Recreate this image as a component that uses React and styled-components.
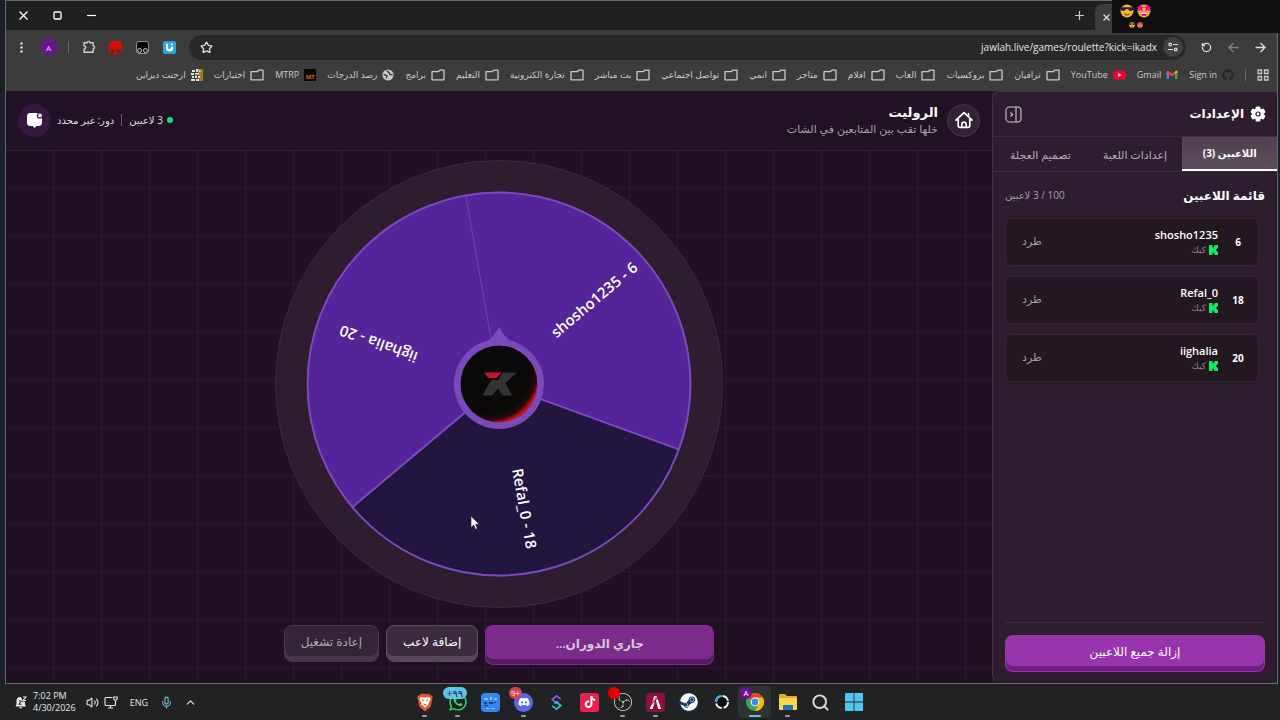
import React from "react";
import styled, { createGlobalStyle, css } from "styled-components";
import { Mic, ChevronUp, Volume2, Search, Star, RotateCcw } from "lucide-react";
import { FaDiscord, FaWhatsapp, FaTiktok, FaSteam, FaGithub } from "react-icons/fa";
import { SiObsstudio, SiFivem } from "react-icons/si";

const GlobalStyle = createGlobalStyle`
  * {
    box-sizing: border-box;
  }

  body {
    margin: 0;
    background: #1c2029;
    font-family: "Open Sans", "DejaVu Sans", sans-serif;
    color: #fff;
  }

  button, input {
    font-family: inherit;
    color: inherit;
  }

  button {
    padding: 0;
    border: 0;
    background: none;
  }

  svg {
    display: block;
    flex: none;
  }
`;

const Desktop = styled.div`
  position: relative;
  display: flex;
  flex-direction: column;
  min-height: 100vh;
  overflow: hidden;
`;

const BrowserWindow = styled.div`
  flex: 1;
  display: flex;
  flex-direction: column;
  margin: 0 2px 0 5px;
  border: 1px solid #6a6a6c;
`;

const TitleBar = styled.header`
  display: flex;
  align-items: center;
  height: 29px;
  background: #1e211f;
`;

const Tab = styled.div`
  align-self: flex-end;
  display: flex;
  align-items: center;
  justify-content: flex-end;
  width: 182px;
  height: 26px;
  padding-left: 5px;
  border-radius: 8px 8px 0 0;
  background: #3c3c3c;
`;

const TitleButton = styled.button`
  display: grid;
  place-items: center;
  width: ${({ $wide }) => ($wide ? "34px" : "12px")};
  height: 24px;
`;

const NewTabButton = styled(TitleButton)`
  width: 24px;
  margin: 0 4px 0 auto;
`;

const Toolbar = styled.div`
  display: flex;
  align-items: center;
  height: 34px;
  padding: 0 3px 0 2px;
  background: #3c3c3c;
`;

const ToolButton = styled.button`
  display: grid;
  place-items: center;
  width: 27px;
  height: 26px;
  color: ${({ $dim }) => ($dim ? "#808080" : "#dcdcdc")};
`;

const Avatar = styled.span`
  display: grid;
  place-items: center;
  width: 16px;
  height: 16px;
  border-radius: 50%;
  background: #6f1196;
  font-size: 8px;
`;

const Divider = styled.span`
  width: 1px;
  height: 12px;
  margin: 0 ${({ $gap }) => $gap || "6px"};
  background: #6b6b6b;
`;

const AddressBar = styled.div`
  flex: 1;
  display: flex;
  align-items: center;
  height: 25px;
  margin: 0 7px 0 6px;
  padding: 0 1px 0 4px;
  border-radius: 13px;
  background: #282828;
`;

const AddressInput = styled.input`
  flex: 1;
  min-width: 0;
  border: 0;
  outline: 0;
  background: none;
  direction: ltr;
  text-align: right;
  font-size: 10px;
  color: #e6e6e6;
`;

const SiteInfo = styled.button`
  display: grid;
  place-items: center;
  width: 20px;
  height: 20px;
  margin: 0 2px 0 4px;
  border-radius: 50%;
  background: #414141;
`;

const BookmarkBar = styled.nav`
  display: flex;
  align-items: center;
  gap: 11px;
  height: 27px;
  padding: 0 8px 5px;
  background: #3c3c3c;
  color: #c9c9c9;
`;

const Bookmark = styled.a`
  display: flex;
  align-items: center;
  gap: 5px;
  font-size: 9px;
  line-height: 16px;
  white-space: nowrap;
  color: inherit;
  text-decoration: none;
`;

const MtBadge = styled.span`
  display: grid;
  place-items: center;
  width: 12px;
  height: 12px;
  background: #0d0505;
  font-size: 6px;
  font-weight: 700;
  color: #f0532a;
`;

const Page = styled.div`
  flex: 1;
  display: flex;
`;

const Sidebar = styled.aside`
  display: flex;
  flex-direction: column;
  width: 285px;
  border: 1px solid #43324a;
  border-width: 1px 0 0 1px;
  border-radius: 0 8px 8px 0;
  border-radius: 8px 0 0 8px;
  background: #2d1d2f;
`;

const SidebarHeader = styled.div`
  display: flex;
  align-items: center;
  gap: 6px;
  height: 44px;
  padding: 0 11px 0 12px;
`;

const SidebarTitle = styled.h2`
  flex: 1;
  margin: 0;
  font-size: 12px;
  line-height: 20px;
  font-weight: 700;
`;

const Tabs = styled.div`
  display: grid;
  grid-template-columns: repeat(3, 1fr);
  height: 36px;
  border: 1px solid #3b2c3e;
  border-width: 1px 0;
`;

const TabButton = styled.button`
  font-size: 11px;
  color: #b7aaba;

  ${({ $active }) =>
    $active &&
    css`
      border-bottom: 2px solid #fff;
      background: linear-gradient(#51414f, #5c4d5d);
      font-size: 10px;
      font-weight: 700;
      color: #fff;
    `}
`;

const ListHeader = styled.div`
  display: flex;
  align-items: center;
  justify-content: space-between;
  height: 46px;
  padding: 0 12px;
`;

const ListTitle = styled.h3`
  margin: 0;
  font-size: 12px;
  font-weight: 700;
`;

const ListCount = styled.span`
  font-size: 10px;
  color: #a99dac;
`;

const Players = styled.ul`
  flex: 1;
  display: flex;
  flex-direction: column;
  gap: 10px;
  margin: 0 18px 0 12px;
  padding: 0;
  list-style: none;
`;

const Player = styled.li`
  display: flex;
  align-items: center;
  height: 48px;
  padding: 0 8px 0 16px;
  border: 1px solid #33242f;
  border-radius: 6px;
  background: #231722;
`;

const PlayerNumber = styled.span`
  width: 24px;
  text-align: center;
  font-size: 10px;
  line-height: 16px;
  font-weight: 700;
`;

const PlayerInfo = styled.div`
  flex: 1;
  padding-right: 8px;
`;

const PlayerName = styled.div`
  font-size: 11px;
  line-height: 16px;
  font-weight: 600;
`;

const Platform = styled.div`
  display: flex;
  align-items: center;
  gap: 3px;
  font-size: 9px;
  line-height: 14px;
  color: #8d818e;
`;

const KickButton = styled.button`
  padding-bottom: 3px;
  font-size: 11px;
  color: #a79ca9;
`;

const SidebarFooter = styled.div`
  margin: 0 12px;
  padding: 12px 0 11px;
  border-top: 1px solid #3b2c3e;
`;

const GameButton = styled.button`
  border: 1px solid transparent;
  border-radius: 8px;
  font-size: 12px;
  white-space: nowrap;

  ${({ $kind }) =>
    ({
      primary: css`
        height: 37px;
        padding-bottom: 5px;
        background: #9835ac;
        box-shadow: inset 0 -5px #6c2180;
      `,
      spin: css`
        width: 229px;
        height: 40px;
        padding-bottom: 4px;
        background: #7b2c8b;
        box-shadow: inset 0 -5px #571a67;
        font-weight: 600;
        color: #d9c6de;
      `,
      normal: css`
        height: 37px;
        padding: 0 16px 5px;
        border-color: #5c4c5e;
        background: #3c2b3d;
        box-shadow: inset 0 -5px #57475a;
      `,
      muted: css`
        height: 37px;
        padding: 0 16px 5px;
        border-color: #493a4b;
        background: #342536;
        box-shadow: inset 0 -5px #463748;
        color: #b0a5b2;
      `,
    })[$kind]}

  ${({ $block }) => $block && "width: 100%;"}
`;

const Game = styled.main`
  flex: 1;
  display: flex;
  flex-direction: column;
  background: #211023;
`;

const GameHeader = styled.div`
  display: flex;
  align-items: center;
  height: 60px;
  padding: 0 12px 1px;
  border-bottom: 1px solid #30203a;
  background: #211124;
`;

const RoundButton = styled.button`
  display: grid;
  place-items: center;
  width: 33px;
  height: 33px;
  border: 1px solid ${({ $purple }) => ($purple ? "#371a42" : "#47374a")};
  border-radius: 50%;
  background: ${({ $purple }) => ($purple ? "#34183f" : "#322235")};
`;

const Titles = styled.div`
  flex: 1;
  padding-right: 9px;
`;

const GameTitle = styled.h1`
  margin: 0;
  font-size: 13px;
  line-height: 18px;
  font-weight: 700;
`;

const Subtitle = styled.p`
  margin: 0;
  font-size: 11px;
  line-height: 16px;
  color: #a99bad;
`;

const Status = styled.div`
  display: flex;
  align-items: center;
  gap: 4px;
  padding-left: 6px;
  font-size: 10px;
  color: #e4dce5;
`;

const OnlineDot = styled.span`
  width: 6px;
  height: 6px;
  border-radius: 50%;
  background: #1ee07a;
`;

const Board = styled.section`
  flex: 1;
  display: flex;
  flex-direction: column;
  align-items: center;
  padding-top: 9px;
  background-image: linear-gradient(to right, #2b182e 1px, transparent 1px),
    linear-gradient(#2b182e 1px, transparent 1px);
  background-size: 48px 48px;
  background-position: -1px 36px;
`;

const Actions = styled.div`
  display: flex;
  align-items: flex-start;
  gap: 7px;
  margin-top: 17px;
`;

const WheelLabel = styled.text`
  font-size: 15px;
  font-weight: 600;
  fill: #fff;
  text-anchor: middle;
  dominant-baseline: central;
  direction: ltr;
`;

const Cursor = styled.svg`
  position: absolute;
  left: 470px;
  top: 515px;
`;

const Overlay = styled.div`
  position: absolute;
  top: 0;
  right: 0;
  display: flex;
  flex-direction: column;
  align-items: flex-end;
  gap: 4px;
  width: 168px;
  height: 33px;
  padding: 4px 0 0 8px;
  background: #0f0f0f;
`;

const EmojiRow = styled.div`
  display: flex;
  gap: ${({ $gap }) => $gap};
  padding-left: ${({ $pad }) => $pad || 0};
`;

const Taskbar = styled.footer`
  display: grid;
  grid-template-columns: 1fr auto 1fr;
  align-items: center;
  height: 36px;
  background: #202224;
`;

const Apps = styled.div`
  grid-column: 2;
  display: flex;
  padding-right: 2px;
`;

const AppButton = styled.button`
  position: relative;
  display: grid;
  place-items: center;
  width: 33px;
  height: 32px;
  border-radius: 4px;
  background: ${({ $active }) => ($active ? "#2f3133" : "none")};

  &::after {
    content: "";
    position: absolute;
    bottom: 1px;
    width: ${({ $active }) => ($active ? "12px" : "5px")};
    height: 2px;
    border-radius: 1px;
    background: ${({ $active, $open }) =>
      $active ? "#5fc3ea" : $open ? "#9a9a9a" : "transparent"};
  }
`;

const AppTile = styled.span`
  display: grid;
  place-items: center;
  width: 19px;
  height: 19px;
  border-radius: ${({ $round }) => ($round ? "50%" : "3px")};
  background: ${({ $bg }) => $bg};
  color: #fff;
`;

const AppBadge = styled.span`
  position: absolute;
  top: 1px;
  left: 2px;
  min-width: ${({ $wide }) => ($wide ? "24px" : "12px")};
  padding: 0 2px;
  border-radius: 6px;
  background: ${({ $bg }) => $bg};
  direction: ltr;
  font-size: ${({ $wide }) => ($wide ? "10px" : "8px")};
  line-height: 12px;
  text-align: center;
  color: ${({ $fg }) => $fg || "#fff"};
`;

const Tray = styled.div`
  display: flex;
  align-items: center;
  justify-content: flex-end;
  padding-left: 15px;
  color: #e8e8e8;
`;

const TrayItem = styled.button`
  display: flex;
  align-items: center;
  gap: 5px;
  margin-left: ${({ $after }) => $after};
  font-size: 9px;
`;

const Clock = styled.time`
  direction: ltr;
  margin-left: 6px;
  font-size: 9px;
  line-height: 12px;
`;

const Folder = () => (
  <svg width="14" height="12" viewBox="0 0 14 12" fill="none" stroke="#c9c9c9" strokeWidth="1.3">
    <path d="M1 2.7h6.2l1.5-1.5H13v9.6H1z" strokeLinejoin="round" />
  </svg>
);

const Globe = () => (
  <svg width="12" height="12" viewBox="0 0 12 12">
    <circle cx="6" cy="6" r="5.6" fill="#c9c9c9" />
    <path d="M1.500 5.500c1.500 0 2 1.200 3.300 1.200L4.500 9.500M5 1.500c0 2 2.800 1.500 2.600 3.300-.1 1.200 1.500.6 3 .9" fill="none" stroke="#3c3c3c" strokeWidth="1.4" />
  </svg>
);

const YouTubeIcon = () => (
  <svg width="13" height="12" viewBox="0 0 13 12">
    <rect y="1.5" width="13" height="9" rx="3" fill="#f3002f" />
    <path d="M5.2 4v4l3.4-2z" fill="#fff" />
  </svg>
);

const GmailIcon = () => (
  <svg width="12" height="12" viewBox="0 0 12 12">
    <path d="M.5 3v7H3V4.8z" fill="#4285f4" />
    <path d="M9 4.8V10h2.5V3z" fill="#34a853" />
    <path d="M.5 3.2C.5 1.6 2 1.6 3 2.4l3 2.3 3-2.300c1-.8 2.500-.8 2.500.8L9 5.300 6 7.500 3 5.300z" fill="#ea4335" />
    <path d="M9 2.4c1-.8 2.500-.8 2.500.8L9 5.300z" fill="#fbbc04" />
  </svg>
);

const DesignIcon = () => (
  <svg width="12" height="12" viewBox="0 0 12 12">
    <path d="M7 0h5v12H7z" fill="#a07a1e" />
    <path d="M1 1h3v2H1zM5 0h2v3H5zM0 4h3v2H0zM4 4h4v1.500H4zM1 7h2v2H1zM4 6.500h2V9H4zM7 7h2v2H7zM0 10h4v2H0zM5 10h3v2H5zM8 1h1.500v2H8z" fill="#e2e2e2" />
  </svg>
);

const AppsGrid = () => (
  <svg width="12" height="12" viewBox="0 0 12 12" fill="none" stroke="#c9c9c9" strokeWidth="1.3">
    <path d="M1 1h3.500v3.500H1zM7.500 1H11v3.500H7.500zM1 7.500h3.500V11H1zM7.500 7.500H11V11H7.500z" />
  </svg>
);

const Puzzle = () => (
  <svg width="14" height="14" viewBox="0 0 14 14" fill="none" stroke="#cfcfcf" strokeWidth="1.4">
    <path d="M2 2.800h3.200a1.400 1.400 0 0 1 2.800 0h3.200v3.100a1.400 1.400 0 0 1 0 2.800v3.500H2V9.300a1.700 1.700 0 0 0 0-3.400z" strokeLinejoin="round" />
  </svg>
);

const MonkeyIcon = ({ red }) => (
  <svg width="13" height="13" viewBox="0 0 13 13">
    <rect x=".5" y=".5" width="12" height="12" rx="2.5" fill={red ? "#d31109" : "#050505"} stroke={red ? "#d31109" : "#8e8e8e"} />
    {red ? (
      <path d="M1 8h4.500v4.500H1.500zM7.500 8H12v4.500H7.500z" fill="#7e1c17" />
    ) : (
      <g fill="#222" stroke="#c4c4c4">
        <circle cx="3.6" cy="9.5" r="2" />
        <circle cx="9.4" cy="9.5" r="2" />
      </g>
    )}
  </svg>
);

const UIcon = () => (
  <svg width="13" height="13" viewBox="0 0 13 13">
    <rect width="13" height="13" rx="2" fill="#2aa5e4" />
    <path d="M4 2.800v4a2.500 2.500 0 0 0 5 0V5.500" fill="none" stroke="#fff" strokeWidth="2.2" />
    <circle cx="8.8" cy="3.2" r="1" fill="#fff" />
  </svg>
);

const Arrow = ({ left }) => (
  <svg width="11" height="11" viewBox="0 0 11 11" fill="none" stroke="currentColor" strokeWidth="1.4">
    {left ? <path d="M10.500 5.500H1.200M5.500 1 1 5.500 5.500 10" /> : <path d="M.5 5.500h9.300M5.500 1 10 5.500 5.500 10" />}
  </svg>
);

const Tune = () => (
  <svg width="10" height="10" viewBox="0 0 10 10" fill="none" stroke="#dcdcdc" strokeWidth="1.2">
    <circle cx="2.2" cy="2.5" r="1.3" />
    <path d="M5 2.500h5M0 7.500h5" />
    <circle cx="7.8" cy="7.5" r="1.3" />
  </svg>
);

const Gear = () => (
  <svg width="16" height="16" viewBox="0 0 16 16">
    <g fill="#fff">
      <circle cx="8" cy="8" r="5.8" />
      {[0, 60, 120].map((angle) => (
        <rect key={angle} x="5.6" y=".4" width="4.8" height="15.2" rx="1.2" transform={`rotate(${angle} 8 8)`} />
      ))}
    </g>
    <circle cx="8" cy="8" r="2" fill="none" stroke="#2d1d2f" strokeWidth="1.2" />
  </svg>
);

const PanelIcon = () => (
  <svg width="17" height="17" viewBox="0 0 17 17" fill="none" stroke="#cfc5d1" strokeWidth="1.1">
    <rect x="1" y="1" width="15" height="15" rx="3.5" />
    <path d="M11 1v15M5.500 6.500l2 2-2 2" />
  </svg>
);

const HomeIcon = () => (
  <svg width="18" height="18" viewBox="0 0 18 18" fill="none" stroke="#fff" strokeWidth="1.7" strokeLinejoin="round" strokeLinecap="round">
    <path d="M1 9.200 9 1.700l8 7.500M3.200 8v6.400c0 1.200.7 1.900 1.900 1.900h7.800c1.200 0 1.900-.7 1.900-1.900V8M13.500 2.500v2.800" />
    <path d="M6.800 16v-2.600a2.200 2.200 0 0 1 4.400 0V16" />
  </svg>
);

const ChatIcon = () => (
  <svg width="17" height="17" viewBox="0 0 17 17">
    <path d="M4.500 1h8A3.500 3.500 0 0 1 16 4.500v6a3.500 3.500 0 0 1-3.500 3.500h-2l-2 2-2-2h-2A3.500 3.500 0 0 1 1 10.500v-6A3.500 3.500 0 0 1 4.500 1z" fill="#fff" />
    <circle cx="14" cy="3.5" r="2.6" fill="#fff" stroke="#34183f" strokeWidth="1.2" />
  </svg>
);

const KickLogo = () => (
  <svg width="9" height="10" viewBox="0 0 9 10">
    <path d="M0 0h3.500v2.500h1V1.200h1V0H9v3.300H8v1H7v1.400h1v1h1V10H5.500V8.800h-1V7.500h-1V10H0z" fill="#14e85c" />
  </svg>
);

const SunglassesEmoji = ({ size }) => (
  <svg width={size} height={size} viewBox="0 0 14 14">
    <circle cx="7" cy="7" r="6.5" fill="#f5b43c" />
    <path d="M.3 3.300h13.400v1.500c-.4 2.600-5 2.900-5.700.3H6C5.300 7.700.7 7.400.3 4.800z" fill="#2c2140" />
    <path d="M4 9.300c2 1.500 4.500 1.500 6 0-.8 3-5.200 3-6 0z" fill="#6b3a12" />
  </svg>
);

const StarEyesEmoji = ({ size }) => (
  <svg width={size} height={size} viewBox="0 0 14 14">
    <circle cx="7" cy="7" r="6.5" fill="#f9a83b" />
    <path d="m3.500.8 1 1.900 2 .3L5 4.600 5.400 7l-1.900-.9L1.400 7l.4-2.300L.2 3l2.300-.3zM10.500.8l1 1.900 2.300.3-1.600 1.700.4 2.300-2.100-.9-1.900.9.4-2.400L7.500 3l2-.3z" fill="#e0148a" stroke="#e0148a" strokeWidth=".6" />
    <path d="M3.500 8.300h7c-.4 4.800-6.600 4.800-7 0z" fill="#b3164d" />
    <path d="M4 8.500h6v1.300H4z" fill="#fff" />
  </svg>
);

const LogoK = () => (
  <g>
    <path d="M484.500 372.500h17l-5 5.500h-8.500z" fill="#c4152f" />
    <path d="M503 372.500h14l-11.500 10.500 6.500 12.500h-9.500l-4.500-7-6 7h-9.500l6.500-12 3.500-3.500h5.500z" fill="#333335" />
  </g>
);

const CENTER = { x: 499, y: 384 };
const RADIUS = 192;

const slices = [
  { label: "shosho1235 - 6", start: -100, color: "#562499" },
  { label: "Refal_0 - 18", start: 20, color: "#221540" },
  { label: "iighalia - 20", start: 140, color: "#562499" },
];

const rim = (angle) => {
  const rad = (angle * Math.PI) / 180;
  return `${CENTER.x + RADIUS * Math.cos(rad)} ${CENTER.y + RADIUS * Math.sin(rad)}`;
};

const Wheel = () => (
  <svg width="448" height="448" viewBox="275 160 448 448" role="img" aria-label="عجلة الروليت">
    <defs>
      <radialGradient id="hub" cx="0.38" cy="0.36" r="0.66">
        <stop offset="0.8" stopColor="#0a0908" />
        <stop offset="0.92" stopColor="#2c0a0a" />
        <stop offset="1" stopColor="#c8141c" />
      </radialGradient>
    </defs>
    <circle cx={CENTER.x} cy={CENTER.y} r="223.5" fill="#2d1d2f" stroke="#3a2a3c" />
    {slices.map(({ label, start, color }) => (
      <path
        key={label}
        d={`M${CENTER.x} ${CENTER.y}L${rim(start)}A${RADIUS} ${RADIUS} 0 0 1 ${rim(start + 120)}Z`}
        fill={color}
      />
    ))}
    <path d={`M${CENTER.x} ${CENTER.y}L${rim(-100)}`} stroke="#7343b4" strokeWidth="1" />
    <path d={`M${rim(20)}L${CENTER.x} ${CENTER.y}L${rim(140)}`} fill="none" stroke="#7a4abb" strokeWidth="2" />
    <circle cx={CENTER.x} cy={CENTER.y} r="191.5" fill="none" stroke="#7a4abb" strokeWidth="2" />
    {slices.map(({ label, start }) => (
      <WheelLabel
        key={label}
        transform={`translate(${CENTER.x} ${CENTER.y}) rotate(${start + 60}) translate(127 -4)`}
      >
        {label}
      </WheelLabel>
    ))}
    <path d="M499 327q5 9 12 15h-24q7-6 12-15z" fill="#7a4abb" />
    <circle cx={CENTER.x} cy={CENTER.y} r="45" fill="#7a4abb" />
    <circle cx={CENTER.x} cy={CENTER.y} r="38.5" fill="url(#hub)" />
    <LogoK />
  </svg>
);

const DndBell = () => (
  <svg width="12" height="13" viewBox="0 0 12 13">
    <path d="M5.500 1a4 4 0 0 0-4 4v3.500L.5 10.500h10.400L10 8.500V6zM4 11.200a1.800 1.800 0 0 0 3.400 0z" fill="#e8e8e8" />
    <path d="M3.800 5h2.700L3.800 8.200h2.700" fill="none" stroke="#202224" />
    <path d="M7 0h5v5.500H7z" fill="#202224" />
    <path d="M8 1h3L8 4.500h3" fill="none" stroke="#e8e8e8" strokeWidth="1.1" />
  </svg>
);

const NetworkIcon = () => (
  <svg width="14" height="13" viewBox="0 0 14 13" fill="none" stroke="#e8e8e8" strokeWidth="1.1">
    <path d="M8.500 1.500H2A1 1 0 0 0 1 2.500v6a1 1 0 0 0 1 1h8.500a1 1 0 0 0 1-1V6M4 12h5M6.500 9.500V12M11.500 6V4M9.800 1v1.500a1.700 1.700 0 0 0 3.400 0V1z" />
  </svg>
);

const WindowsLogo = () => (
  <svg width="18" height="18" viewBox="0 0 18 18" fill="#4fc6f2">
    <path d="M0 0h8.600v8.600H0zM9.400 0H18v8.600H9.400zM0 9.400h8.600V18H0zM9.400 9.400H18V18H9.400z" />
  </svg>
);

const ExplorerIcon = () => (
  <svg width="20" height="18" viewBox="0 0 20 18">
    <path d="M1 2a1 1 0 0 1 1-1h5l2 2h9a1 1 0 0 1 1 1v12H1z" fill="#e2a92c" />
    <path d="M1 5h18v11a1 1 0 0 1-1 1H2a1 1 0 0 1-1-1z" fill="#fbd551" />
    <path d="M5 12h10v5H5z" fill="#1c78b8" />
  </svg>
);

const ChromeIcon = () => (
  <svg width="18" height="18" viewBox="0 0 18 18">
    <circle cx="9" cy="9" r="9" fill="#34a853" />
    <path d="M9 9 1.200 4.500A9 9 0 0 1 16.800 4.500H9z" fill="#ea4335" />
    <path d="M16.800 4.500A9 9 0 0 1 9 18l3.900-6.750L9 4.500z" fill="#fbbc04" />
    <circle cx="9" cy="9" r="4.4" fill="#fff" />
    <circle cx="9" cy="9" r="3.4" fill="#4285f4" />
  </svg>
);

const RingIcon = () => (
  <svg width="16" height="16" viewBox="0 0 16 16" fill="none">
    <circle cx="8" cy="8" r="5" fill="#0b0b0c" />
    <circle cx="8" cy="8" r="6" stroke="#f2f2f2" strokeWidth="2" strokeDasharray="7.4 2" />
    <path d="M8 2a6 6 0 0 0-6 6" stroke="#2fb3e8" strokeWidth="2" />
  </svg>
);

const KnotIcon = () => (
  <svg width="13" height="17" viewBox="0 0 13 17" fill="none" strokeWidth="1.7">
    <path d="M10.800 5.200 6.500 1.800 2.200 5.500 6.500 9l2-1.600" stroke="#8b5cf0" />
    <path d="M2.200 11.800 6.500 15.200l4.300-3.700L6.500 8l-2 1.600" stroke="#20c7d4" />
  </svg>
);

const BlocksTile = () => (
  <svg width="19" height="19" viewBox="0 0 19 19">
    <rect width="19" height="19" rx="4" fill="#2f86ee" />
    <path d="M3 5h4v2H3zM9 4h2v3H9zM13 5h3v2h-3zM5 15h3v1H5zM10 15h4v1h-4z" fill="#6fd0ff" />
    <path d="M3 9h3v2H3zM8 9h4v2H8zM13 9h3v1h-3zM3 12h4v1H3z" fill="#173a9e" />
    <path d="M7 3h1v2H7zM15 8h1v2h-1zM8 12h2v1H8z" fill="#e14b8c" />
  </svg>
);

const BraveIcon = () => (
  <svg width="16" height="19" viewBox="0 0 16 19">
    <path d="M4 .8h8l1.600 1.700 1.500 0 .7 2-.8 2.200-1.200 6.800L8 18.400l-5.800-4.900L1 6.700.2 4.500l.7-2h1.500z" fill="#f0512b" />
    <path d="M3 4.500 5.500 4 8 4.700l2.500-.7 2.500.5.5 2-2 3.500.3 1.500-2 1.200L8 15l-1.800-2.300-2-1.200.3-1.500-2-3.500z" fill="#fff" />
    <path d="M4.500 6.300 7 7.200l-.8 1.600zM11.500 6.300 9 7.200l.8 1.600zM6.500 11.300 8 10.700l1.500.6L8 12.500z" fill="#f0512b" />
  </svg>
);

const bookmarks = [
  { label: "Sign in", icon: <FaGithub size={12} color="#24292e" /> },
  { label: "Gmail", icon: <GmailIcon /> },
  { label: "YouTube", icon: <YouTubeIcon /> },
  { label: "ترافيان" },
  { label: "بروكسيات" },
  { label: "العاب" },
  { label: "افلام" },
  { label: "متاجر" },
  { label: "انمي" },
  { label: "تواصل اجتماعي" },
  { label: "بث مباشر" },
  { label: "تجارة الكترونية" },
  { label: "التعليم" },
  { label: "برامج" },
  { label: "رصد الدرجات", icon: <Globe /> },
  { label: "MTRP", icon: <MtBadge>MT</MtBadge> },
  { label: "اختبارات" },
  { label: "ارجنت ديزاين", icon: <DesignIcon /> },
];

const players = [
  { number: 6, name: "shosho1235" },
  { number: 18, name: "Refal_0" },
  { number: 20, name: "iighalia" },
];

const apps = [
  { name: "Start", icon: <WindowsLogo /> },
  { name: "Search", icon: <Search size={19} strokeWidth={2.5} color="#d8d8d8" /> },
  { name: "File Explorer", icon: <ExplorerIcon />, open: true },
  {
    name: "Chrome",
    icon: <ChromeIcon />,
    active: true,
    badge: <AppBadge $bg="#6f1196">A</AppBadge>,
  },
  { name: "Recorder", icon: <RingIcon /> },
  {
    name: "Steam",
    icon: (
      <AppTile $round $bg="#103a6b">
        <FaSteam size={18} />
      </AppTile>
    ),
  },
  {
    name: "FiveM",
    open: true,
    icon: (
      <AppTile $bg="#8e0f3e">
        <SiFivem size={13} />
      </AppTile>
    ),
  },
  {
    name: "OBS",
    open: true,
    icon: <SiObsstudio size={18} color="#d9d9d9" />,
    badge: <AppBadge $bg="#e60000">&nbsp;</AppBadge>,
  },
  {
    name: "TikTok",
    icon: (
      <AppTile $bg="#ee1d52">
        <FaTiktok size={12} />
      </AppTile>
    ),
  },
  { name: "Knot", icon: <KnotIcon /> },
  {
    name: "Discord",
    open: true,
    icon: (
      <AppTile $round $bg="#5865f2">
        <FaDiscord size={12} />
      </AppTile>
    ),
    badge: <AppBadge $bg="#d8415a">9+</AppBadge>,
  },
  { name: "Games", icon: <BlocksTile /> },
  {
    name: "WhatsApp",
    open: true,
    icon: <FaWhatsapp size={20} color="#3fd366" />,
    badge: (
      <AppBadge $bg="#5ec4ec" $fg="#10303c" $wide>
        +٩٩
      </AppBadge>
    ),
  },
  { name: "Brave", open: true, icon: <BraveIcon /> },
];

const App = () => (
  <Desktop dir="rtl">
    <GlobalStyle />
    <BrowserWindow>
      <TitleBar>
        <Tab>
          <TitleButton aria-label="إغلاق علامة التبويب">
            <svg width="7" height="7" viewBox="0 0 7 7" stroke="#ddd" strokeWidth="1.3">
              <path d="M.5.5l6 6M6.500.5l-6 6" />
            </svg>
          </TitleButton>
        </Tab>
        <NewTabButton aria-label="علامة تبويب جديدة">
          <svg width="9" height="9" viewBox="0 0 9 9" stroke="#ccc" strokeWidth="1.2">
            <path d="M4.500 0v9M0 4.500h9" />
          </svg>
        </NewTabButton>
        <TitleButton $wide aria-label="تصغير">
          <svg width="9" height="9" viewBox="0 0 9 9" stroke="#fff" strokeWidth="1.2">
            <path d="M0 4.500h9" />
          </svg>
        </TitleButton>
        <TitleButton $wide aria-label="تكبير">
          <svg width="9" height="9" viewBox="0 0 9 9" stroke="#fff" strokeWidth="1.3" fill="none">
            <rect x="1" y="1" width="7" height="7" rx="1" />
          </svg>
        </TitleButton>
        <TitleButton $wide aria-label="إغلاق">
          <svg width="9" height="9" viewBox="0 0 9 9" stroke="#fff" strokeWidth="1.3">
            <path d="M.5.5l8 8M8.500.5l-8 8" />
          </svg>
        </TitleButton>
      </TitleBar>

      <Toolbar>
        <ToolButton aria-label="رجوع"><Arrow /></ToolButton>
        <ToolButton $dim aria-label="تقدم"><Arrow left /></ToolButton>
        <ToolButton aria-label="إعادة تحميل"><RotateCcw size={11} strokeWidth={2.8} /></ToolButton>
        <AddressBar>
          <SiteInfo aria-label="معلومات الموقع"><Tune /></SiteInfo>
          <AddressInput aria-label="العنوان" defaultValue="jawlah.live/games/roulette?kick=ikadx" />
          <ToolButton aria-label="إشارة مرجعية"><Star size={13} strokeWidth={2.5} /></ToolButton>
        </AddressBar>
        <ToolButton aria-label="U"><UIcon /></ToolButton>
        <ToolButton aria-label="Tampermonkey"><MonkeyIcon /></ToolButton>
        <ToolButton aria-label="Tampermonkey 2"><MonkeyIcon red /></ToolButton>
        <ToolButton aria-label="الإضافات"><Puzzle /></ToolButton>
        <Divider />
        <ToolButton aria-label="الملف الشخصي"><Avatar>A</Avatar></ToolButton>
        <ToolButton aria-label="القائمة">
          <svg width="3" height="11" viewBox="0 0 3 11" fill="#dcdcdc">
            <circle cx="1.5" cy="1.5" r="1.2" />
            <circle cx="1.5" cy="5.5" r="1.2" />
            <circle cx="1.5" cy="9.5" r="1.2" />
          </svg>
        </ToolButton>
      </Toolbar>

      <BookmarkBar>
        <AppsGrid />
        <Divider $gap="0" />
        {bookmarks.map(({ label, icon }) => (
          <Bookmark key={label} href="#">
            {icon || <Folder />}
            {label}
          </Bookmark>
        ))}
      </BookmarkBar>

      <Page>
        <Sidebar>
          <SidebarHeader>
            <Gear />
            <SidebarTitle>الإعدادات</SidebarTitle>
            <button aria-label="إخفاء"><PanelIcon /></button>
          </SidebarHeader>
          <Tabs>
            <TabButton $active>اللاعبين (3)</TabButton>
            <TabButton>إعدادات اللعبة</TabButton>
            <TabButton>تصميم العجلة</TabButton>
          </Tabs>
          <ListHeader>
            <ListTitle>قائمة اللاعبين</ListTitle>
            <ListCount><bdi dir="ltr">3 / 100</bdi> لاعبين</ListCount>
          </ListHeader>
          <Players>
            {players.map(({ number, name }) => (
              <Player key={number}>
                <PlayerNumber>{number}</PlayerNumber>
                <PlayerInfo>
                  <PlayerName>{name}</PlayerName>
                  <Platform><KickLogo />كيك</Platform>
                </PlayerInfo>
                <KickButton>طرد</KickButton>
              </Player>
            ))}
          </Players>
          <SidebarFooter>
            <GameButton $kind="primary" $block>إزالة جميع اللاعبين</GameButton>
          </SidebarFooter>
        </Sidebar>

        <Game>
          <GameHeader>
            <RoundButton aria-label="الرئيسية"><HomeIcon /></RoundButton>
            <Titles>
              <GameTitle>الروليت</GameTitle>
              <Subtitle>خلها تقب بين المتابعين في الشات</Subtitle>
            </Titles>
            <Status>
              <OnlineDot />
              <span>3 لاعبين</span>
              <Divider $gap="3px" />
              <span>دور: غير محدد</span>
            </Status>
            <RoundButton $purple aria-label="المحادثة"><ChatIcon /></RoundButton>
          </GameHeader>
          <Board>
            <Wheel />
            <Actions>
              <GameButton $kind="spin">جاري الدوران...</GameButton>
              <GameButton $kind="normal">إضافة لاعب</GameButton>
              <GameButton $kind="muted">إعادة تشغيل</GameButton>
            </Actions>
          </Board>
        </Game>
      </Page>
    </BrowserWindow>

    <Taskbar>
      <Apps>
        {apps.map(({ name, icon, badge, open, active }) => (
          <AppButton key={name} aria-label={name} $open={open} $active={active}>
            {icon}
            {badge}
          </AppButton>
        ))}
      </Apps>
      <Tray>
        <TrayItem $after="11px" aria-label="المزيد"><ChevronUp size={13} /></TrayItem>
        <TrayItem $after="12px" aria-label="الميكروفون"><Mic size={13} color="#7cc6dc" /></TrayItem>
        <TrayItem $after="12px">ENG</TrayItem>
        <TrayItem $after="10px" aria-label="الشبكة والصوت">
          <NetworkIcon />
          <Volume2 size={13} />
        </TrayItem>
        <Clock>
          7:02 PM
          <br />
          4/30/2026
        </Clock>
        <DndBell />
      </Tray>
    </Taskbar>

    <Overlay>
      <EmojiRow $gap="3px">
        <StarEyesEmoji size={14} />
        <SunglassesEmoji size={14} />
      </EmojiRow>
      <EmojiRow $gap="2px" $pad="9px">
        <StarEyesEmoji size={6} />
        <SunglassesEmoji size={6} />
      </EmojiRow>
    </Overlay>
    <Cursor width="10" height="16" viewBox="0 0 10 16">
      <path d="M1 1v11.500l2.700-2.500 1.800 4.300 1.900-.8-1.800-4.200h3.600z" fill="#fff" stroke="#1a1030" strokeWidth=".6" />
    </Cursor>
  </Desktop>
);

export default App;
